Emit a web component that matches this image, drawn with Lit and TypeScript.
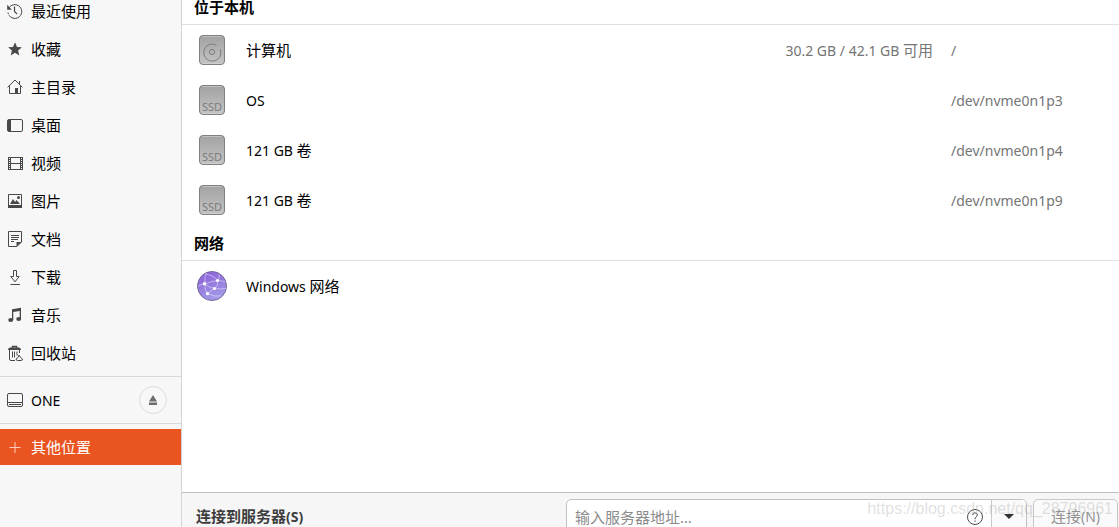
import { LitElement, html, css, svg, nothing, TemplateResult } from "lit";
import { customElement, property } from "lit/decorators.js";

/** Wraps Latin runs so that they can be set slightly smaller than the Han text. */
const mixed = (text: string) =>
  text
    .split(/([\x20-\x7e]+)/)
    .filter((part) => part !== "")
    .map((part) =>
      /^[\x20-\x7e]+$/.test(part) ? html`<span class="latin">${part}</span>` : part
    );

const glyphs: Record<string, TemplateResult> = {
  recent: svg`<path d="M1.6 5.6A6.9 6.9 0 1 1 1 9.4" fill="none" stroke="currentColor" stroke-dasharray="36 1"/><path d="M.2 1.8v5h4.6z"/><path d="M7.5 3.5v5l2.6 2.6" fill="none" stroke="currentColor" stroke-width="1.2"/>`,
  star: svg`<path d="M8 1.3l2 4.6 4.9.4-3.8 3.2 1.2 4.9L8 11.8l-4.3 2.6 1.2-4.9L1.100 6.300 6 5.900z"/>`,
  home: svg`<path d="M.6 8.300L8 1l7.400 7.300M2.500 7v7.500h11V7M12.500 2v3" fill="none" stroke="currentColor"/><path d="M8 9h3v6H8z"/>`,
  desktop: svg`<rect x=".5" y="2.500" width="15" height="12" rx="1.500" fill="none" stroke="currentColor"/><path d="M1 3h3v11H1z"/>`,
  video: svg`<path d="M1 2h3v13H1zM13 2h3v13h-3z"/><path d="M4 2.500h9M4 8.500h9M4 14.500h9" stroke="currentColor"/><path d="M2 3h1v1H2zm0 2h1v1H2zm0 2h1v1H2zm0 2h1v1H2zm0 2h1v1H2zm0 2h1v1H2zM14 3h1v1h-1zm0 2h1v1h-1zm0 2h1v1h-1zm0 2h1v1h-1zm0 2h1v1h-1zm0 2h1v1h-1z" fill="#f7f7f7"/>`,
  image: svg`<path d="M1.500 1.500h13v12h-13z" fill="none" stroke="currentColor"/><path d="M1 12h14v3H1zM3 11l3-5 2 3 1.500-2L13 11z"/><circle cx="11.500" cy="4.500" r="1.500"/>`,
  document: svg`<path d="M1.500.5h13V11L10 15.500H1.500z" fill="none" stroke="currentColor"/><path d="M4 4.500h8M4 6.500h8M4 8.500h7M4 10.500h3" stroke="currentColor"/><path d="M9.500 15.500V11h5z"/>`,
  download: svg`<path d="M6.500 1.500h3v6h2.700L8 12.800 3.800 7.500h2.700zM3.500 15.500h9.500" fill="none" stroke="currentColor"/>`,
  music: svg`<path d="M5 2.200L14 .8v10.700h-1.300V4L6.300 5v8H5z"/><ellipse cx="3.700" cy="13" rx="2.500" ry="2"/><ellipse cx="11.700" cy="12" rx="2.500" ry="2"/>`,
  trash: svg`<path d="M5.500 3V1.500h4V3" fill="none" stroke="currentColor" stroke-width="1.500"/><path d="M1 5q0-2.500 2-2.500h9q2 0 2 2.500z"/><path d="M2.500 5v9q0 1.500 1.500 1.500h4M12.500 5v3M5.500 6.500v6M7.500 6.500v6M10 6.500v4" fill="none" stroke="currentColor"/><path d="M10.500 15.500q-1.500 0-1.500-1.500l2-1.500L12 10l1.500 2.500 2 1.500q0 1.500-1.500 1.500z" fill="#f7f7f7" stroke="currentColor"/>`,
  drive: svg`<rect x=".5" y="1.500" width="15" height="13" rx="1.500" fill="none" stroke="currentColor"/><path d="M1 10.500h14M2 12.500h12" stroke="currentColor"/>`,
  plus: svg`<path d="M2.500 8.500h11M8 3v11" fill="none" stroke="currentColor"/>`,
  help: svg`<circle cx="8" cy="8" r="7.500" fill="none" stroke="currentColor"/><path d="M5.700 6.200q0-2.400 2.300-2.400t2.300 2.200q0 1.300-1.200 2T8 10v.3" fill="none" stroke="currentColor"/><path d="M7.400 11.500h1.200v1.200H7.400z"/>`,
};

const disk = (kind: string) => svg`
  <defs>
    <linearGradient id="metal" x1="0" y1="0" x2="0" y2="1">
      <stop offset="0" stop-color="#a2a2a2"/><stop offset="1" stop-color="#c4c4c4"/>
    </linearGradient>
  </defs>
  <rect x="3.500" y="1.500" width="25" height="29" rx="3.500" fill="url(#metal)" stroke="#808080"/>
  <path d="M6.500 2.500h19M6.500 29.500h19" stroke="#d6d6d6" opacity=".6"/>
  ${kind === "ssd"
    ? svg`<text x="16" y="26.500" text-anchor="middle" class="ssd">SSD</text>`
    : svg`<path d="M20.500 11.200A8.500 8.500 0 1 0 24 15" fill="none" stroke="#7b7b7b"/><circle cx="16" cy="18" r="2.600" fill="none" stroke="#7b7b7b"/>`}`;

const network = svg`
  <defs>
    <linearGradient id="globe" x1="0" y1="0" x2="0.400" y2="1">
      <stop offset="0" stop-color="#8a5bd6"/><stop offset="1" stop-color="#a298e8"/>
    </linearGradient>
    <clipPath id="disc"><circle cx="16" cy="16" r="14"/></clipPath>
  </defs>
  <circle cx="16" cy="16" r="14.500" fill="url(#globe)" stroke="#74699a"/>
  <g clip-path="url(#disc)" fill="none" stroke="#fff" stroke-opacity=".45">
    <path d="M9 14Q8 7 11 1M9 14Q4 14 1 17M9 14q6-3 13-3.500M9 14q4 4 10 4.500M9 14q-1 6 3 10M22 10.500Q17 5 9 4M22 10.500q4 0 9 2M22 10.500q0 5-3 8M19 18.500q-4 1-7 5.500M19 18.500q5 1 11 0M12 24q7 3 13 2M22 10.500q2-3 1-7"/>
  </g>
  <g fill="#fff"><circle cx="8.500" cy="13.700" r="1.700"/><circle cx="21.500" cy="10.500" r="1.600"/><circle cx="18.500" cy="18.500" r="1.500"/><circle cx="11.500" cy="23.700" r="1.600"/></g>`;

const base = css`
  * { box-sizing: border-box; }
  button {
    font: inherit;
    color: inherit;
    background: none;
    border: 0;
    margin: 0;
    padding: 0;
  }
  svg { display: block; flex: none; }
  .latin { font-size: 14px; }
`;

@customElement("places-sidebar")
class PlacesSidebar extends LitElement {
  static styles = [
    base,
    css`
      :host {
        display: block;
        overflow: hidden;
        background: #f7f7f7;
        border-right: 1px solid #d4d4d4;
      }
      .places {
        display: flex;
        flex-direction: column;
        gap: 2px;
        margin-top: -7px;
      }
      .place {
        display: flex;
        align-items: center;
        gap: 8px;
        width: 100%;
        height: 36px;
        padding: 0 7px;
        text-align: left;
      }
      .place svg { color: #484848; fill: #484848; }
      .place.current { background: #e95420; color: #fff; }
      .place.current svg { color: #fbd0c0; }
      .rule {
        height: 1px;
        border: 0;
        margin: 5px 0;
        background: #dadada;
      }
      .device {
        display: flex;
        align-items: center;
        padding: 4px 14px 4px 0;
      }
      .device .place { flex: 1; height: 28px; }
      .eject {
        display: grid;
        place-items: center;
        width: 28px;
        height: 28px;
        border: 1px solid #dcdcdc;
        border-radius: 50%;
      }
      .eject svg { fill: #6c6c6c; }
    `,
  ];

  private places = [
    ["recent", "最近使用"],
    ["star", "收藏"],
    ["home", "主目录"],
    ["desktop", "桌面"],
    ["video", "视频"],
    ["image", "图片"],
    ["document", "文档"],
    ["download", "下载"],
    ["music", "音乐"],
    ["trash", "回收站"],
  ];

  private place(icon: string, name: string, current = false) {
    return html`<button class="place ${current ? "current" : ""}">
      <svg width="16" height="16" viewBox="0 0 16 16" aria-hidden="true">${glyphs[icon]}</svg>
      <span>${mixed(name)}</span>
    </button>`;
  }

  render() {
    return html`
      <nav class="places">${this.places.map(([icon, name]) => this.place(icon, name))}</nav>
      <hr class="rule" />
      <div class="device">
        ${this.place("drive", "ONE")}
        <button class="eject" aria-label="弹出">
          <svg width="10" height="10" viewBox="0 0 10 10"><path d="M5 0l4 6.500H1zM1 7.500h8V10H1z" /></svg>
        </button>
      </div>
      <hr class="rule" />
      ${this.place("plus", "其他位置", true)}
    `;
  }
}

interface Location {
  icon: "disk" | "ssd" | "network";
  name: string;
  space?: string;
  path?: string;
}

@customElement("location-group")
class LocationGroup extends LitElement {
  @property() heading = "";
  @property({ attribute: false }) locations: Location[] = [];

  static styles = [
    base,
    css`
      :host { display: block; }
      .heading {
        height: 36px;
        margin: 0;
        padding: 7px 12px 0;
        border-bottom: 1px solid #e0e0e0;
        font-size: 15px;
        line-height: 22px;
        font-weight: 700;
      }
      .list { list-style: none; margin: 0; padding: 0; }
      .location {
        display: grid;
        grid-template-columns: 32px 1fr auto 150px;
        align-items: center;
        height: 50px;
        padding: 0 18px 0 14px;
      }
      .name { padding-left: 18px; }
      .detail { color: #757575; }
      .space { padding-right: 18px; }
      .ssd { font-size: 11px; fill: #7b7b7b; }
    `,
  ];

  render() {
    return html`
      <h2 class="heading">${this.heading}</h2>
      <ul class="list">
        ${this.locations.map(
          (item) => html`<li class="location">
            <svg width="32" height="32" viewBox="0 0 32 32" aria-hidden="true">
              ${item.icon === "network" ? network : disk(item.icon)}
            </svg>
            <span class="name">${mixed(item.name)}</span>
            <span class="detail space">${item.space ? mixed(item.space) : nothing}</span>
            <span class="detail">${item.path ? mixed(item.path) : nothing}</span>
          </li>`
        )}
      </ul>
    `;
  }
}

@customElement("server-bar")
class ServerBar extends LitElement {
  static styles = [
    base,
    css`
      :host {
        display: flex;
        align-items: center;
        gap: 6px;
        height: 48px;
        padding: 0 1px 0 14px;
        background: #f6f6f6;
        border-top: 1px solid #c0c0c0;
      }
      .label { flex: 1; font-weight: 700; color: #3d3d3d; }
      .entry {
        display: flex;
        width: 50%;
        height: 36px;
        border: 1px solid #c0c0c0;
        border-radius: 5px;
        background: #fff;
      }
      .address {
        flex: 1;
        min-width: 0;
        border: 0;
        outline: 0;
        padding: 0 8px;
        background: none;
        font: inherit;
      }
      .address::placeholder { color: #8b8b8b; opacity: 1; }
      .help { padding: 0 8px; color: #505050; }
      .help svg { fill: #505050; }
      .recent {
        display: grid;
        place-items: center;
        width: 35px;
        border-left: 1px solid #c8c8c8;
        border-radius: 0 4px 4px 0;
        background: #fafafa;
      }
      .recent svg { fill: #333; }
      .connect {
        width: 85px;
        height: 36px;
        border: 1px solid #c8c8c8;
        border-radius: 5px;
        background: #fafafa;
        color: #929292;
      }
    `,
  ];

  render() {
    return html`
      <label class="label" for="address">${mixed("连接到服务器(S)")}</label>
      <div class="entry">
        <input class="address" id="address" type="text" placeholder="输入服务器地址…" />
        <button class="help" aria-label="帮助">
          <svg width="16" height="16" viewBox="0 0 16 16">${glyphs.help}</svg>
        </button>
        <button class="recent" aria-label="最近的服务器">
          <svg width="10" height="5" viewBox="0 0 10 5"><path d="M0 0h10L5 5z" /></svg>
        </button>
      </div>
      <button class="connect" disabled>${mixed("连接(N)")}</button>
    `;
  }
}

@customElement("app-root")
class AppRoot extends LitElement {
  static styles = [
    base,
    css`
      :host {
        display: grid;
        grid-template-columns: 182px 1fr;
        position: relative;
        height: 100vh;
        overflow: hidden;
        background: #fff;
        color: #000;
        font-family: "Noto Sans", "Noto Sans CJK SC", sans-serif;
        font-size: 15px;
        line-height: 22px;
      }
      .content {
        display: flex;
        flex-direction: column;
        min-width: 0;
        min-height: 0;
        margin: -11px 0 -13px;
      }
      .locations { flex: 1; min-height: 0; }
      .watermark {
        position: absolute;
        right: 6px;
        bottom: 8px;
        font-family: "Liberation Sans", sans-serif;
        font-size: 16px;
        line-height: 20px;
        color: rgba(150, 150, 150, 0.3);
        pointer-events: none;
      }
    `,
  ];

  private local: Location[] = [
    { icon: "disk", name: "计算机", space: "30.2 GB / 42.1 GB 可用", path: "/" },
    { icon: "ssd", name: "OS", path: "/dev/nvme0n1p3" },
    { icon: "ssd", name: "121 GB 卷", path: "/dev/nvme0n1p4" },
    { icon: "ssd", name: "121 GB 卷", path: "/dev/nvme0n1p9" },
  ];

  private remote: Location[] = [{ icon: "network", name: "Windows 网络" }];

  render() {
    return html`
      <places-sidebar></places-sidebar>
      <main class="content">
        <div class="locations">
          <location-group heading="位于本机" .locations=${this.local}></location-group>
          <location-group heading="网络" .locations=${this.remote}></location-group>
        </div>
        <server-bar></server-bar>
      </main>
      <span class="watermark">https://blog.csdn.net/qq_28796961</span>
    `;
  }
}
